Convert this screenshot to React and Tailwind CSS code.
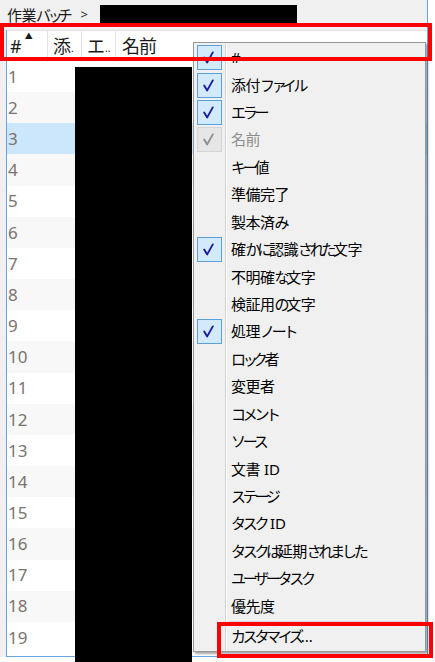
import React from "react";

const items = [
  { t: "#", c: "on" },
  { t: "添付ファイル", c: "on" },
  { t: "エラー", c: "on" },
  { t: "名前", c: "dis" },
  { t: "キー値" },
  { t: "準備完了" },
  { t: "製本済み" },
  { t: "確かに認識された文字", c: "on" },
  { t: "不明確な文字" },
  { t: "検証用の文字" },
  { t: "処理ノート", c: "on" },
  { t: "ロック者" },
  { t: "変更者" },
  { t: "コメント" },
  { t: "ソース" },
  { t: "文書 ID" },
  { t: "ステージ" },
  { t: "タスク ID" },
  { t: "タスクは延期されました" },
  { t: "ユーザータスク" },
  { t: "優先度" },
];

const SMALL = /[ァィゥェォッャュョぁぃぅぇぉっゃゅょ]/;
const KANA = /[\u3040-\u30ff]/;

// Render Japanese text with proportional-looking kana (like Meiryo UI)
function J({ text }) {
  const parts = [];
  let cur = "";
  let curType = null;
  const typeOf = (ch) =>
    SMALL.test(ch) ? "s" : KANA.test(ch) ? "k" : /[\u4e00-\u9fff]/.test(ch) ? "h" : "o";
  for (const ch of text) {
    const ty = typeOf(ch);
    if (ty !== curType && cur) {
      parts.push([curType, cur]);
      cur = "";
    }
    curType = ty;
    cur += ch;
  }
  if (cur) parts.push([curType, cur]);
  return (
    <span>
      {parts.map(([ty, s], i) => (
        <span
          key={i}
          className={
            ty === "s"
              ? "tracking-[-5px]"
              : ty === "k"
              ? "tracking-[-3.3px]"
              : ty === "h"
              ? "tracking-[-0.5px]"
              : ""
          }
        >
          {s}
        </span>
      ))}
    </span>
  );
}

function Check({ color }) {
  return (
    <svg width="25" height="25" viewBox="0 0 25 25" className="block">
      <path
        d="M7.2 12.6 L10.2 17.4 L15.8 7.4"
        fill="none"
        stroke={color}
        strokeWidth="1.9"
        strokeLinecap="round"
        strokeLinejoin="round"
      />
    </svg>
  );
}

function Box({ c }) {
  if (c === "on")
    return (
      <div className="w-[25px] h-[25px] border border-[#5aa0dc] bg-[#d3eafc]">
        <div className="-m-px">
          <Check color="#1b1ba0" />
        </div>
      </div>
    );
  if (c === "dis")
    return (
      <div className="w-[25px] h-[25px] border border-[#d4d4d4] bg-[#e6e6e6]">
        <div className="-m-px">
          <Check color="#8f8f8f" />
        </div>
      </div>
    );
  return <div className="w-[25px] h-[25px]" />;
}

function MenuRow({ t, c }) {
  return (
    <div className="flex h-[27.43px]">
      <div className="w-[29px] flex items-center pl-[1px]">
        <Box c={c} />
      </div>
      <div className="w-px bg-[#d2d2d2]" />
      <div className="w-px bg-white" />
      <div
        className={`flex-1 flex items-center pl-[4px] text-[15px] leading-none whitespace-nowrap ${
          c === "dis" ? "text-[#8d8d8d]" : "text-black"
        }`}
      >
        <J text={t} />
      </div>
    </div>
  );
}

export default function App() {
  const rows = Array.from({ length: 19 }, (_, i) => i + 1);
  return (
    <div className="relative w-[435px] h-[662px] overflow-hidden bg-white font-['Noto_Sans','Noto_Sans_CJK_JP',sans-serif]">
      {/* window */}
      <div className="w-[428px] h-[657px] bg-[#f0f0f0] border-r border-[#68a5e0] flex flex-col">
        {/* title bar */}
        <div className="h-[30px] shrink-0 flex items-center pl-[7px] text-[15px] text-[#1a1a1a] whitespace-nowrap">
          <J text="作業バッチ" />
          <span className="ml-[11px] text-[13px]">&gt;</span>
        </div>
        {/* grid */}
        <div className="flex-1 ml-[6px] border-l border-b border-[#68a5e0] bg-white flex flex-col">
          <div className="h-[31px] shrink-0 flex border-t border-[#e3e3e3] text-[18px] text-[#1a1a1a] leading-none">
            <div className="w-[41px] border-r border-[#e3e3e3] flex items-center pl-[3px]">
              <span>#</span>
              <span className="self-start mt-[1px] ml-[3px] text-[8px]">▲</span>
            </div>
            <div className="w-[34px] border-r border-[#e3e3e3] flex items-center pl-[5px]">
              添<span className="text-[10px] self-end mb-[8px]">.</span>
            </div>
            <div className="w-[34px] border-r border-[#e3e3e3] flex items-center pl-[5px]">
              エ<span className="text-[10px] self-end mb-[8px]">..</span>
            </div>
            <div className="flex-1 flex items-center pl-[6px] tracking-[-1px]">名前</div>
          </div>
          {rows.map((n) => (
            <div
              key={n}
              className={`h-[31.17px] shrink-0 flex items-center pl-[1px] text-[17px] text-[#7a736e] ${
                n === 3 ? "bg-[#cce6fc]" : n % 2 === 0 ? "bg-[#f8f8f8]" : "bg-white"
              }`}
            >
              {n}
            </div>
          ))}
        </div>
      </div>

      {/* redactions */}
      <div className="absolute left-[100px] top-[5px] w-[197px] h-[19px] bg-black" />
      <div className="absolute left-[75px] top-[67px] w-[117px] h-[600px] bg-black" />

      {/* context menu */}
      <div className="absolute left-[193px] top-[42px] w-[233px] bg-[#f0f0f0] border border-[#979797] shadow-[2px_2px_2px_rgba(0,0,0,0.35)] pt-px pb-px pl-[2px] pr-[2px]">
        {items.map((it, i) => (
          <MenuRow key={i} t={it.t} c={it.c} />
        ))}
        <div className="flex h-[3px]">
          <div className="w-[29px]" />
          <div className="w-px bg-[#d2d2d2]" />
          <div className="w-px bg-white" />
          <div className="flex-1 flex flex-col justify-center pl-[2px]">
            <div className="h-px bg-[#d7d7d7]" />
          </div>
        </div>
        <MenuRow t="カスタマイズ..." />
      </div>

      {/* annotation boxes */}
      <div className="absolute left-0 top-[23px] w-[432px] h-[38px] border-[4px] border-[#ff0000]" />
      <div className="absolute left-[217px] top-[622px] w-[216px] h-[36px] border-[4px] border-[#ff0000]" />
    </div>
  );
}
